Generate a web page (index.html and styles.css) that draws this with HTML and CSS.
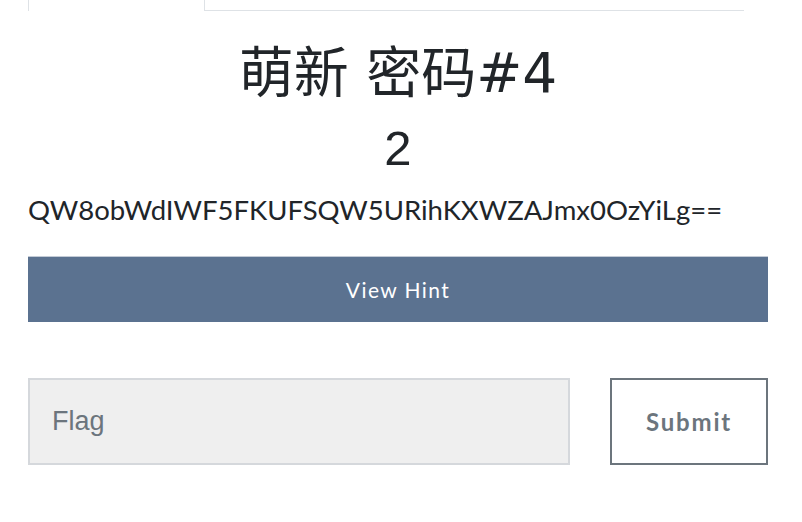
FILE: index.html
```html
<!DOCTYPE html>
<html lang="zh">
<head>
<meta charset="utf-8">
<title>萌新 密码#4</title>
<link rel="stylesheet" href="styles.css">
</head>
<body>
<div class="page">
  <div class="tabs"><div class="tab-active"></div></div>
  <h1 class="title">萌新 密码#4</h1>
  <div class="value">2</div>
  <p class="desc">QW8obWdIWF5FKUFSQW5URihKXWZAJmx0OzYiLg==</p>
  <button class="hint-btn" type="button">View Hint</button>
  <form class="answer-row">
    <input class="flag-input" type="text" placeholder="Flag">
    <button class="submit-btn" type="button">Submit</button>
  </form>
</div>
</body>
</html>
```
FILE: styles.css
```css
html, body {
  margin: 0;
  padding: 0;
  background: #fff;
}
body {
  font-family: Lato, "Liberation Sans", sans-serif;
  color: #212529;
}
.page {
  width: 740px;
  padding: 0 34px 0 28px;
}
.tabs {
  display: flex;
  width: 716px;
  height: 10px;
  border-bottom: 1px solid #dee2e6;
}
.tab-active {
  width: 177px;
  height: 11px;
  box-sizing: border-box;
  border-left: 1px solid #dee2e6;
  border-right: 1px solid #dee2e6;
  background: #fff;
}
.title {
  margin: 30px 0 0;
  font-family: "DejaVu Sans", "Noto Sans CJK SC", sans-serif;
  font-size: 55px;
  font-weight: 400;
  line-height: 64px;
  text-align: center;
  color: #212529;
}
.value {
  margin: 15px 0 0;
  font-family: "Liberation Sans", sans-serif;
  font-size: 49px;
  line-height: 56px;
  text-align: center;
  color: #212529;
}
.desc {
  margin: 17px 0 0;
  font-family: Lato, sans-serif;
  font-size: 27.5px;
  line-height: 33px;
  color: #212529;
}
.hint-btn {
  display: block;
  box-sizing: border-box;
  width: 740px;
  height: 66px;
  margin: 30px 0 0;
  padding: 0;
  border: 0;
  border-top: 1px solid #c3cbd6;
  background: #5b7290;
  color: #fff;
  font-family: Lato, sans-serif;
  font-size: 21px;
  letter-spacing: 1.4px;
}
.answer-row {
  display: flex;
  gap: 40px;
  margin: 56px 0 0;
}
.flag-input {
  width: 542px;
  height: 87px;
  box-sizing: border-box;
  margin: 0;
  padding: 0 22px;
  border: 2px solid #d5d8dc;
  background: #efefef;
  font-family: "Liberation Sans", sans-serif;
  font-size: 27px;
  color: #495057;
}
.flag-input::placeholder {
  color: #6c757d;
}
.submit-btn {
  width: 158px;
  height: 87px;
  box-sizing: border-box;
  margin: 0;
  padding: 0;
  border: 2px solid #6c757d;
  background: #fff;
  color: #6c757d;
  font-family: Lato, sans-serif;
  font-weight: 700;
  font-size: 24px;
  letter-spacing: 1.8px;
}
```
